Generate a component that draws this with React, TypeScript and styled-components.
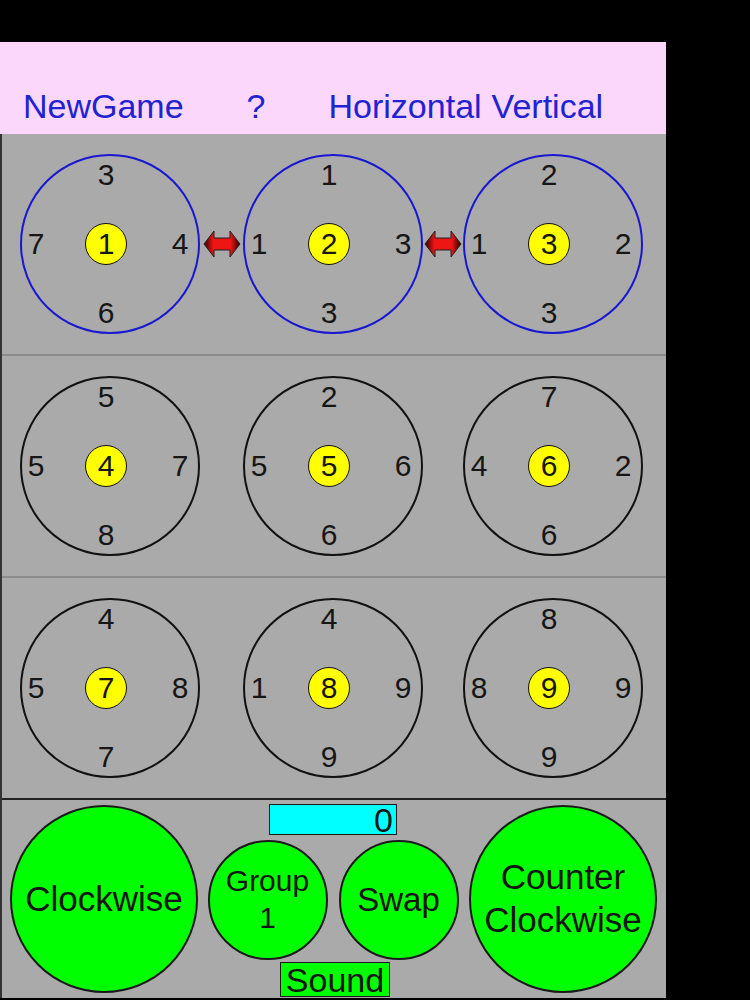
import React from 'react';
import styled, { createGlobalStyle } from 'styled-components';

const GlobalStyle = createGlobalStyle`
  html, body {
    margin: 0;
    padding: 0;
    background: #000;
  }
  body {
    font-family: "Liberation Sans", Arial, sans-serif;
  }
`;

const Screen = styled.div`
  width: 750px;
  height: 1000px;
  background: #000;
  padding-top: 42px;
  box-sizing: border-box;
`;

const Panel = styled.div`
  width: 666px;
  display: flex;
  flex-direction: column;
`;

const Header = styled.div`
  height: 92px;
  background: #fbd7fb;
  display: flex;
  align-items: flex-end;
  padding: 0 0 11px 23px;
  box-sizing: border-box;
`;

const HeaderButton = styled.span<{ $gap: number }>`
  margin-left: ${p => p.$gap}px;
  font-size: 34px;
  line-height: 34px;
  color: #2222d2;
`;

const Board = styled.div`
  background: #aaaaaa;
  border-left: 2px solid #333;
`;

const Row = styled.div<{ $last?: boolean }>`
  height: 222px;
  box-sizing: border-box;
  border-bottom: 2px solid ${p => (p.$last ? '#222' : '#8c8c8c')};
  display: flex;
  align-items: center;
  padding-left: 18px;
`;

const Spacer = styled.div<{ $w: number }>`
  width: ${p => p.$w}px;
  display: flex;
  justify-content: center;
  align-items: center;
`;

const Ring = styled.div<{ $active?: boolean }>`
  width: 180px;
  height: 180px;
  box-sizing: border-box;
  border-radius: 50%;
  border: 2px solid ${p => (p.$active ? '#1818d0' : '#111')};
  display: grid;
  grid-template-columns: 28px 1fr 36px;
  grid-template-rows: 38px 1fr 38px;
  align-items: center;
  justify-items: center;
`;

const Digit = styled.span<{ $col: number; $row: number }>`
  grid-column: ${p => p.$col};
  grid-row: ${p => p.$row};
  font-size: 30px;
  line-height: 1;
  color: #161616;
`;

const Hub = styled.div`
  grid-column: 2;
  grid-row: 2;
  width: 42px;
  height: 42px;
  box-sizing: border-box;
  border-radius: 50%;
  border: 1.5px solid #111;
  background: #ffff00;
  display: flex;
  align-items: center;
  justify-content: center;
  font-size: 30px;
  line-height: 1;
  color: #161616;
`;

const Controls = styled.div`
  height: 198px;
  box-sizing: border-box;
  display: flex;
  align-items: center;
  padding-left: 8px;
`;

const Button = styled.div<{ $size: number; $font: number }>`
  width: ${p => p.$size}px;
  height: ${p => p.$size}px;
  box-sizing: border-box;
  border-radius: 50%;
  border: 2px solid #1a1a1a;
  background: #00ff00;
  display: flex;
  align-items: center;
  justify-content: center;
  text-align: center;
  font-size: ${p => p.$font}px;
  line-height: 1.22;
  color: #141414;
  flex-shrink: 0;
`;

const Middle = styled.div`
  width: 250px;
  margin: 0 11px 0 10px;
  align-self: stretch;
  display: flex;
  flex-direction: column;
  align-items: center;
  padding-top: 4px;
  box-sizing: border-box;
`;

const Score = styled.div`
  width: 128px;
  height: 31px;
  box-sizing: border-box;
  border: 1.5px solid #1a1a1a;
  background: #00ffff;
  text-align: right;
  padding-right: 3px;
  font-size: 34px;
  line-height: 30px;
  color: #141414;
`;

const Pair = styled.div`
  display: flex;
  gap: 11px;
  margin: 5px 0 2px;
`;

const Sound = styled.div`
  width: 110px;
  height: 35px;
  box-sizing: border-box;
  border: 1.5px solid #1a1a1a;
  background: #00ff00;
  text-align: center;
  font-size: 34px;
  line-height: 34px;
  color: #141414;
  margin-left: 4px;
`;

const SwapArrow = () => (
  <svg width="38" height="30" viewBox="0 0 38 30">
    <defs>
      <linearGradient id="ah" x1="0" x2="1" y1="0" y2="0">
        <stop offset="0" stopColor="#2a0000" />
        <stop offset="0.26" stopColor="#ee1515" />
        <stop offset="0.74" stopColor="#ee1515" />
        <stop offset="1" stopColor="#2a0000" />
      </linearGradient>
    </defs>
    <path
      d="M1 15 L11 2 L11 9 L27 9 L27 2 L37 15 L27 28 L27 21 L11 21 L11 28 Z"
      fill="url(#ah)"
      stroke="#222"
      strokeWidth="1"
      strokeLinejoin="round"
    />
  </svg>
);

type Wheel = { c: number; t: number; l: number; r: number; b: number };

const rows: Wheel[][] = [
  [
    { c: 1, t: 3, l: 7, r: 4, b: 6 },
    { c: 2, t: 1, l: 1, r: 3, b: 3 },
    { c: 3, t: 2, l: 1, r: 2, b: 3 },
  ],
  [
    { c: 4, t: 5, l: 5, r: 7, b: 8 },
    { c: 5, t: 2, l: 5, r: 6, b: 6 },
    { c: 6, t: 7, l: 4, r: 2, b: 6 },
  ],
  [
    { c: 7, t: 4, l: 5, r: 8, b: 7 },
    { c: 8, t: 4, l: 1, r: 9, b: 9 },
    { c: 9, t: 8, l: 8, r: 9, b: 9 },
  ],
];

const WheelView = ({ w, active }: { w: Wheel; active: boolean }) => (
  <Ring $active={active}>
    <Digit $col={2} $row={1}>{w.t}</Digit>
    <Digit $col={1} $row={2}>{w.l}</Digit>
    <Hub>{w.c}</Hub>
    <Digit $col={3} $row={2}>{w.r}</Digit>
    <Digit $col={2} $row={3}>{w.b}</Digit>
  </Ring>
);

export default function App() {
  return (
    <Screen>
      <GlobalStyle />
      <Panel>
        <Header>
          <HeaderButton $gap={0}>NewGame</HeaderButton>
          <HeaderButton $gap={63}>?</HeaderButton>
          <HeaderButton $gap={63}>Horizontal</HeaderButton>
          <HeaderButton $gap={10}>Vertical</HeaderButton>
        </Header>
        <Board>
          {rows.map((row, i) => (
            <Row key={i} $last={i === rows.length - 1}>
              <WheelView w={row[0]} active={i === 0} />
              <Spacer $w={43}>{i === 0 && <SwapArrow />}</Spacer>
              <WheelView w={row[1]} active={i === 0} />
              <Spacer $w={40}>{i === 0 && <SwapArrow />}</Spacer>
              <WheelView w={row[2]} active={i === 0} />
            </Row>
          ))}
          <Controls>
            <Button $size={188} $font={35}>Clockwise</Button>
            <Middle>
              <Score>0</Score>
              <Pair>
                <Button $size={120} $font={30}>
                  Group
                  <br />1
                </Button>
                <Button $size={120} $font={33}>Swap</Button>
              </Pair>
              <Sound>Sound</Sound>
            </Middle>
            <Button $size={188} $font={35}>
              Counter
              <br />
              Clockwise
            </Button>
          </Controls>
        </Board>
      </Panel>
    </Screen>
  );
}
